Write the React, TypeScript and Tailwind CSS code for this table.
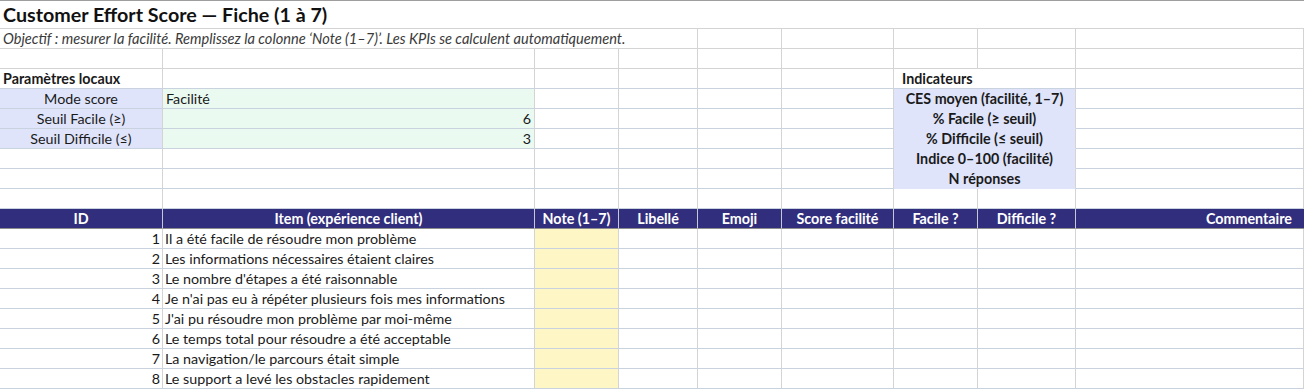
import React from "react";

const GRID =
  "grid grid-cols-[163px_372px_84px_79px_84px_112px_84px_98px_228px]";
const CELL =
  "h-5 border-r border-b border-[#d4d4d4] flex items-center px-[3px] whitespace-nowrap text-[14.3px] text-[#1a1a1a]";
const CELLB =
  "h-5 border-r border-b border-r-[#d4d4d4] border-b-[#c9d3e0] flex items-center px-[3px] whitespace-nowrap text-[14.3px] text-[#1a1a1a]";

function Empty({ n, blue }: { n: number; blue?: boolean }) {
  return (
    <>
      {Array.from({ length: n }).map((_, i) => (
        <div key={i} className={blue ? CELLB : CELL} />
      ))}
    </>
  );
}

const params: [string, string, boolean][] = [
  ["Mode score", "Facilité", false],
  ["Seuil Facile (≥)", "6", true],
  ["Seuil Difficile (≤)", "3", true],
];

const indicators = [
  "CES moyen (facilité, 1–7)",
  "% Facile (≥ seuil)",
  "% Difficile (≤ seuil)",
  "Indice 0–100 (facilité)",
  "N réponses",
];

const headers = [
  "ID",
  "Item (expérience client)",
  "Note (1–7)",
  "Libellé",
  "Emoji",
  "Score facilité",
  "Facile ?",
  "Difficile ?",
];

const items = [
  "Il a été facile de résoudre mon problème",
  "Les informations nécessaires étaient claires",
  "Le nombre d'étapes a été raisonnable",
  "Je n'ai pas eu à répéter plusieurs fois mes informations",
  "J'ai pu résoudre mon problème par moi-même",
  "Le temps total pour résoudre a été acceptable",
  "La navigation/le parcours était simple",
  "Le support a levé les obstacles rapidement",
];

export default function App() {
  const lav = "bg-[#dfe4fb]";
  return (
    <div className="w-[1304px] h-[389px] overflow-hidden bg-white border-t border-[#9e9e9e] font-['Lato','Carlito','Liberation_Sans',sans-serif]">
      {/* Title */}
      <div className="h-[28px] border-b border-[#d4d4d4] flex items-center px-[3px] text-[19.7px] font-bold text-[#111] whitespace-nowrap">
        Customer Effort Score — Fiche (1 à 7)
      </div>
      <div className={GRID}>
        {/* Subtitle */}
        <div className="h-5 col-span-4 border-r border-b border-[#d4d4d4] flex items-center px-[3px] whitespace-nowrap italic text-[14.6px] text-[#3a3a3a]">
          Objectif : mesurer la facilité. Remplissez la colonne ‘Note (1–7)’. Les KPIs se calculent automatiquement.
        </div>
        <Empty n={5} />

        {/* empty row */}
        <Empty n={9} />

        {/* Paramètres locaux / Indicateurs */}
        <div className={`${CELLB} font-bold`}>Paramètres locaux</div>
        <Empty n={5} blue />
        <div className={`${CELLB} col-span-2 font-bold pl-[8px]`}>Indicateurs</div>
        <div className={CELLB} />

        {/* Rows 89-188 */}
        {[0, 1, 2, 3, 4].map((r) => {
          const p = params[r];
          return (
            <React.Fragment key={r}>
              {p ? (
                <>
                  <div className={`${CELLB} ${lav} justify-center`}>{p[0]}</div>
                  <div className={`${CELLB} bg-[#eafaf1] ${p[2] ? "justify-end" : ""}`}>
                    {p[1]}
                  </div>
                </>
              ) : (
                <Empty n={2} blue />
              )}
              <Empty n={4} blue />
              <div
                className={`h-5 col-span-2 flex items-center justify-center font-bold text-[14.3px] text-[#1a1a1a] whitespace-nowrap ${lav} border-r border-b border-r-[#d4d4d4] border-b-[#dfe4fb]`}
              >
                {indicators[r]}
              </div>
              <div className={CELLB} />
            </React.Fragment>
          );
        })}

        {/* empty row 189-208 */}
        <Empty n={9} blue />

        {/* Header */}
        {headers.map((h) => (
          <div
            key={h}
            className="h-5 bg-[#312e7e] border-r border-b border-r-[#c8c8d4] border-b-[#8c8c8c] flex items-center justify-center text-white font-bold text-[14.3px] whitespace-nowrap"
          >
            {h}
          </div>
        ))}
        <div className="h-5 bg-[#312e7e] border-b border-b-[#8c8c8c] flex items-center justify-end pr-[12px] text-white font-bold text-[14.3px] whitespace-nowrap">
          Commentaire
        </div>

        {/* Data rows */}
        {items.map((it, i) => (
          <React.Fragment key={i}>
            <div className={`${CELLB} justify-end pr-[2px]`}>{i + 1}</div>
            <div className={`${CELLB} pl-[2px]`}>{it}</div>
            <div className={`${CELLB} bg-[#fff6c6]`} />
            <Empty n={6} blue />
          </React.Fragment>
        ))}
      </div>
    </div>
  );
}
